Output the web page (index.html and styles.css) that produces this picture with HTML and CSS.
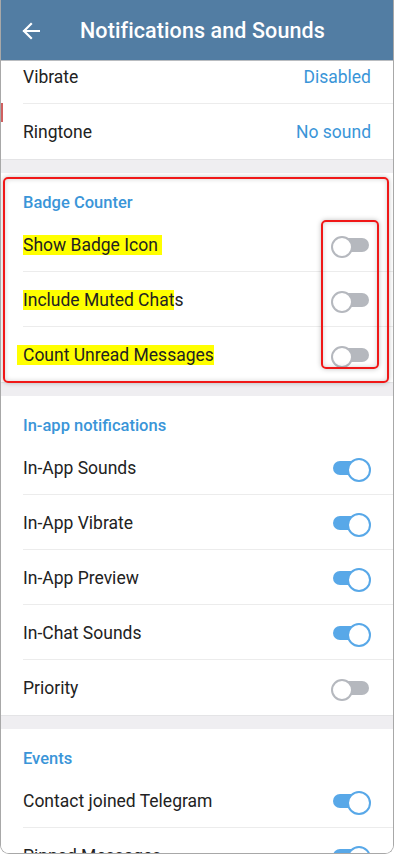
FILE: index.html
```html
<!DOCTYPE html>
<html>
<head>
<meta charset="utf-8">
<link rel="stylesheet" href="styles.css">
</head>
<body>
<div class="frame">
  <header class="topbar">
    <svg class="back" width="18" height="18" viewBox="0 0 18 18"><path d="M17 9H2M9 2L2 9l7 7" fill="none" stroke="#fff" stroke-width="2.2" stroke-linecap="square"/></svg>
    <h1 class="title">Notifications and Sounds</h1>
  </header>
  <div class="scroll">
    <div class="list">
      <section class="section">
        <div class="row"><span class="label">Vibrate</span><span class="value">Disabled</span></div>
        <div class="row last"><span class="label">Ringtone</span><span class="value">No sound</span></div>
      </section>
      <div class="gap"></div>
      <section class="section">
        <div class="sec-title">Badge Counter</div>
        <div class="row"><span class="label"><mark class="hl">Show Badge Icon&nbsp;</mark></span><span class="toggle off"></span></div>
        <div class="row"><span class="label"><mark class="hl">Include Muted Chat</mark>s</span><span class="toggle off"></span></div>
        <div class="row last"><span class="label"><mark class="hl hl-wide">Count Unread Messages</mark></span><span class="toggle off"></span></div>
      </section>
      <div class="gap"></div>
      <section class="section">
        <div class="sec-title">In-app notifications</div>
        <div class="row"><span class="label">In-App Sounds</span><span class="toggle on"></span></div>
        <div class="row"><span class="label">In-App Vibrate</span><span class="toggle on"></span></div>
        <div class="row"><span class="label">In-App Preview</span><span class="toggle on"></span></div>
        <div class="row"><span class="label">In-Chat Sounds</span><span class="toggle on"></span></div>
        <div class="row last"><span class="label">Priority</span><span class="toggle off"></span></div>
      </section>
      <div class="gap"></div>
      <section class="section">
        <div class="sec-title">Events</div>
        <div class="row"><span class="label">Contact joined Telegram</span><span class="toggle on"></span></div>
        <div class="row"><span class="label">Pinned Messages</span><span class="toggle on"></span></div>
      </section>
    </div>
  </div>
  <div class="annot annot-outer"></div>
  <div class="annot annot-inner"></div>
  <div class="annot-tick"></div>
</div>
</body>
</html>
```
FILE: styles.css
```css
* { box-sizing: border-box; }
html, body { margin: 0; padding: 0; background: #fff; }
body { font-family: Roboto, "Noto Sans", sans-serif; color: #222; }

.frame {
  position: relative;
  width: 394px;
  height: 854px;
  border: 1px solid #a8a8a8;
  border-top: none;
  border-radius: 0 0 9px 9px;
  overflow: hidden;
  display: flex;
  flex-direction: column;
  background: #fff;
}

.topbar {
  flex: none;
  height: 61px;
  background: #527da3;
  border-bottom: 1px solid #b9bcc0;
  display: flex;
  align-items: center;
  padding-left: 21px;
}
.back { flex: none; margin-right: 40px; margin-top: 1px; }
.title {
  margin: 0;
  color: #fff;
  font-size: 21.5px;
  font-weight: 500;
  letter-spacing: 0.1px;
}

.scroll { flex: 1; overflow: hidden; }
.list { margin-top: -12px; }

.section { background: #fff; }
.gap {
  height: 14px;
  background: #efeef1;
  border-top: 1px solid #e4e4e6;
}

.sec-title {
  height: 44px;
  padding: 20px 22px 0;
  line-height: 20px;
  font-size: 16.5px;
  font-weight: 500;
  color: #3a95d8;
}

.row {
  position: relative;
  height: 55px;
  display: flex;
  align-items: center;
  justify-content: space-between;
  padding: 0 22px 0 22px;
  font-size: 17.5px;
}
.row::after {
  content: "";
  position: absolute;
  left: 22px;
  right: 0;
  bottom: 0;
  height: 1px;
  background: #ececec;
}
.row.last::after { display: none; }

.label { color: #222; line-height: 20px; }
.value { color: #3a95d8; }

.hl {
  background: #ffff00;
  color: #222;
  padding: 0;
}
.hl-wide { margin-left: -6px; padding-left: 6px; }

.toggle {
  position: relative;
  width: 38px;
  height: 20px;
  flex: none;
  margin-right: 1px;
}
.toggle::before {
  content: "";
  position: absolute;
  left: 1px;
  right: 1px;
  top: 3px;
  height: 14px;
  border-radius: 7px;
}
.toggle::after {
  content: "";
  position: absolute;
  top: 1px;
  width: 18px;
  height: 18px;
  border-radius: 50%;
  background: #fff;
  border: 2px solid;
}
.toggle.off::before { background: #b5b8be; }
.toggle.off::after { left: -1px; border-color: #b5b8be; }
.toggle.on::before { background: #58a8e8; }
.toggle.on::after { right: -1px; border-color: #58a8e8; width: 20px; height: 20px; top: 0; }

.annot {
  position: absolute;
  border: 2px solid #f01818;
  border-radius: 5px;
  box-shadow: 0 0 5px rgba(0,0,0,0.25), inset 0 0 5px rgba(0,0,0,0.18);
  pointer-events: none;
}
.annot-outer { left: 2px; top: 177px; width: 386px; height: 206px; }
.annot-inner { left: 320px; top: 220px; width: 58px; height: 149px; }
.annot-tick {
  position: absolute;
  left: -1px;
  top: 103px;
  width: 3px;
  height: 19px;
  background: #d06060;
}
```
